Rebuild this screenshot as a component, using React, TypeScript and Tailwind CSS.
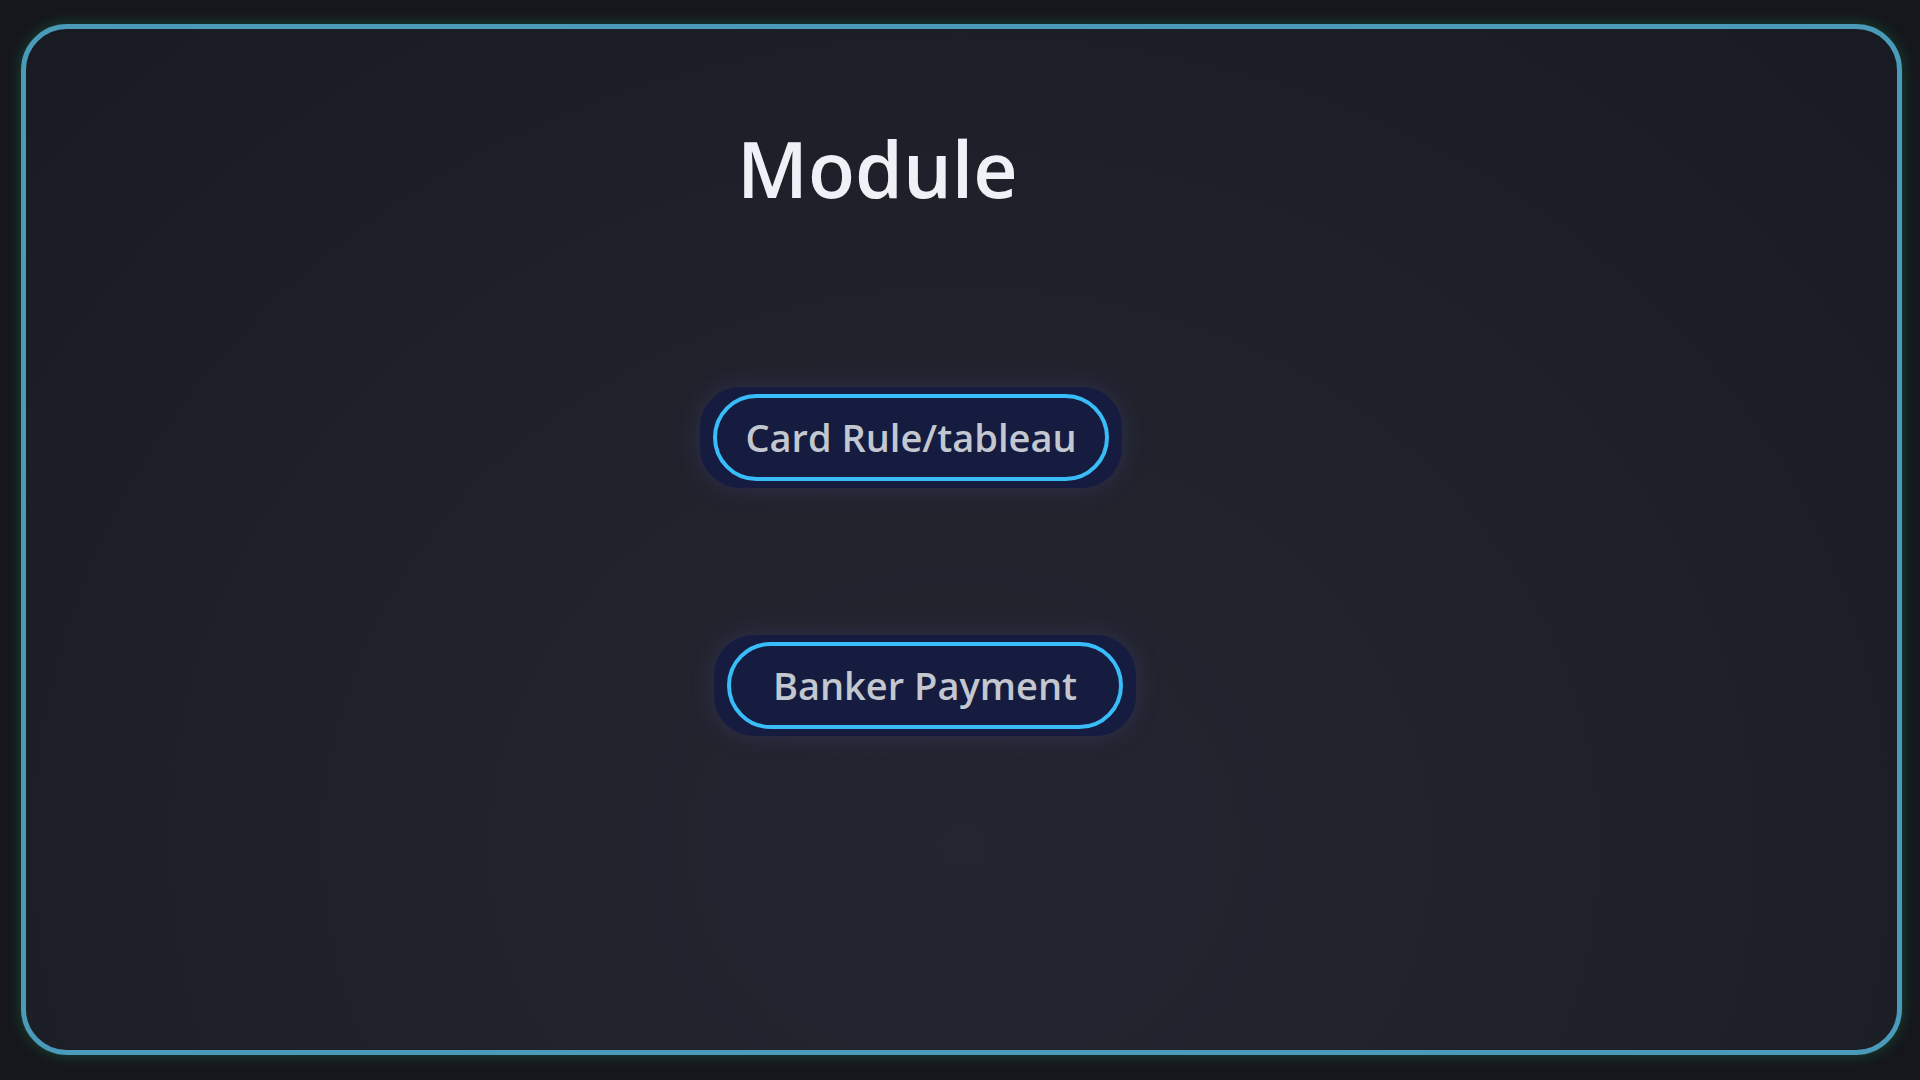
import React from "react";

function NavButton({ label, ml }: { label: string; ml: string }) {
  return (
    <div className={`self-start ${ml} rounded-[40px] bg-[#161c40] px-[13px] py-[7px] shadow-[0_0_24px_rgba(110,100,200,0.22)]`}>
      <button className="flex h-[87px] w-[396px] items-center justify-center rounded-full border-[4px] border-[#38bdf8] bg-[#151c3f] text-[38px] font-semibold text-[#c3c7cf] [font-family:'Open_Sans',sans-serif]">
        {label}
      </button>
    </div>
  );
}

export default function App() {
  return (
    <div className="flex h-[1080px] w-[1920px] flex-col bg-[#15171d] pb-[25px] pl-[21px] pr-[18px] pt-[24px]">
      <div className="flex flex-1 flex-col rounded-[46px] border-[5px] border-[#4a9aba] bg-[radial-gradient(ellipse_at_50%_80%,#232530_0%,#1f212a_55%,#191b22_100%)] shadow-[0_0_14px_rgba(34,160,80,0.35)]">
        <h1 className="ml-[711px] mt-[100px] text-[77px] font-semibold leading-[80px] text-[#eef2f6] [font-family:'Open_Sans',sans-serif]">
          Module
        </h1>
        <div className="mt-[178px] flex flex-col gap-[147px]">
          <NavButton label="Card Rule/tableau" ml="ml-[674px]" />
          <NavButton label="Banker Payment" ml="ml-[688px]" />
        </div>
      </div>
    </div>
  );
}
